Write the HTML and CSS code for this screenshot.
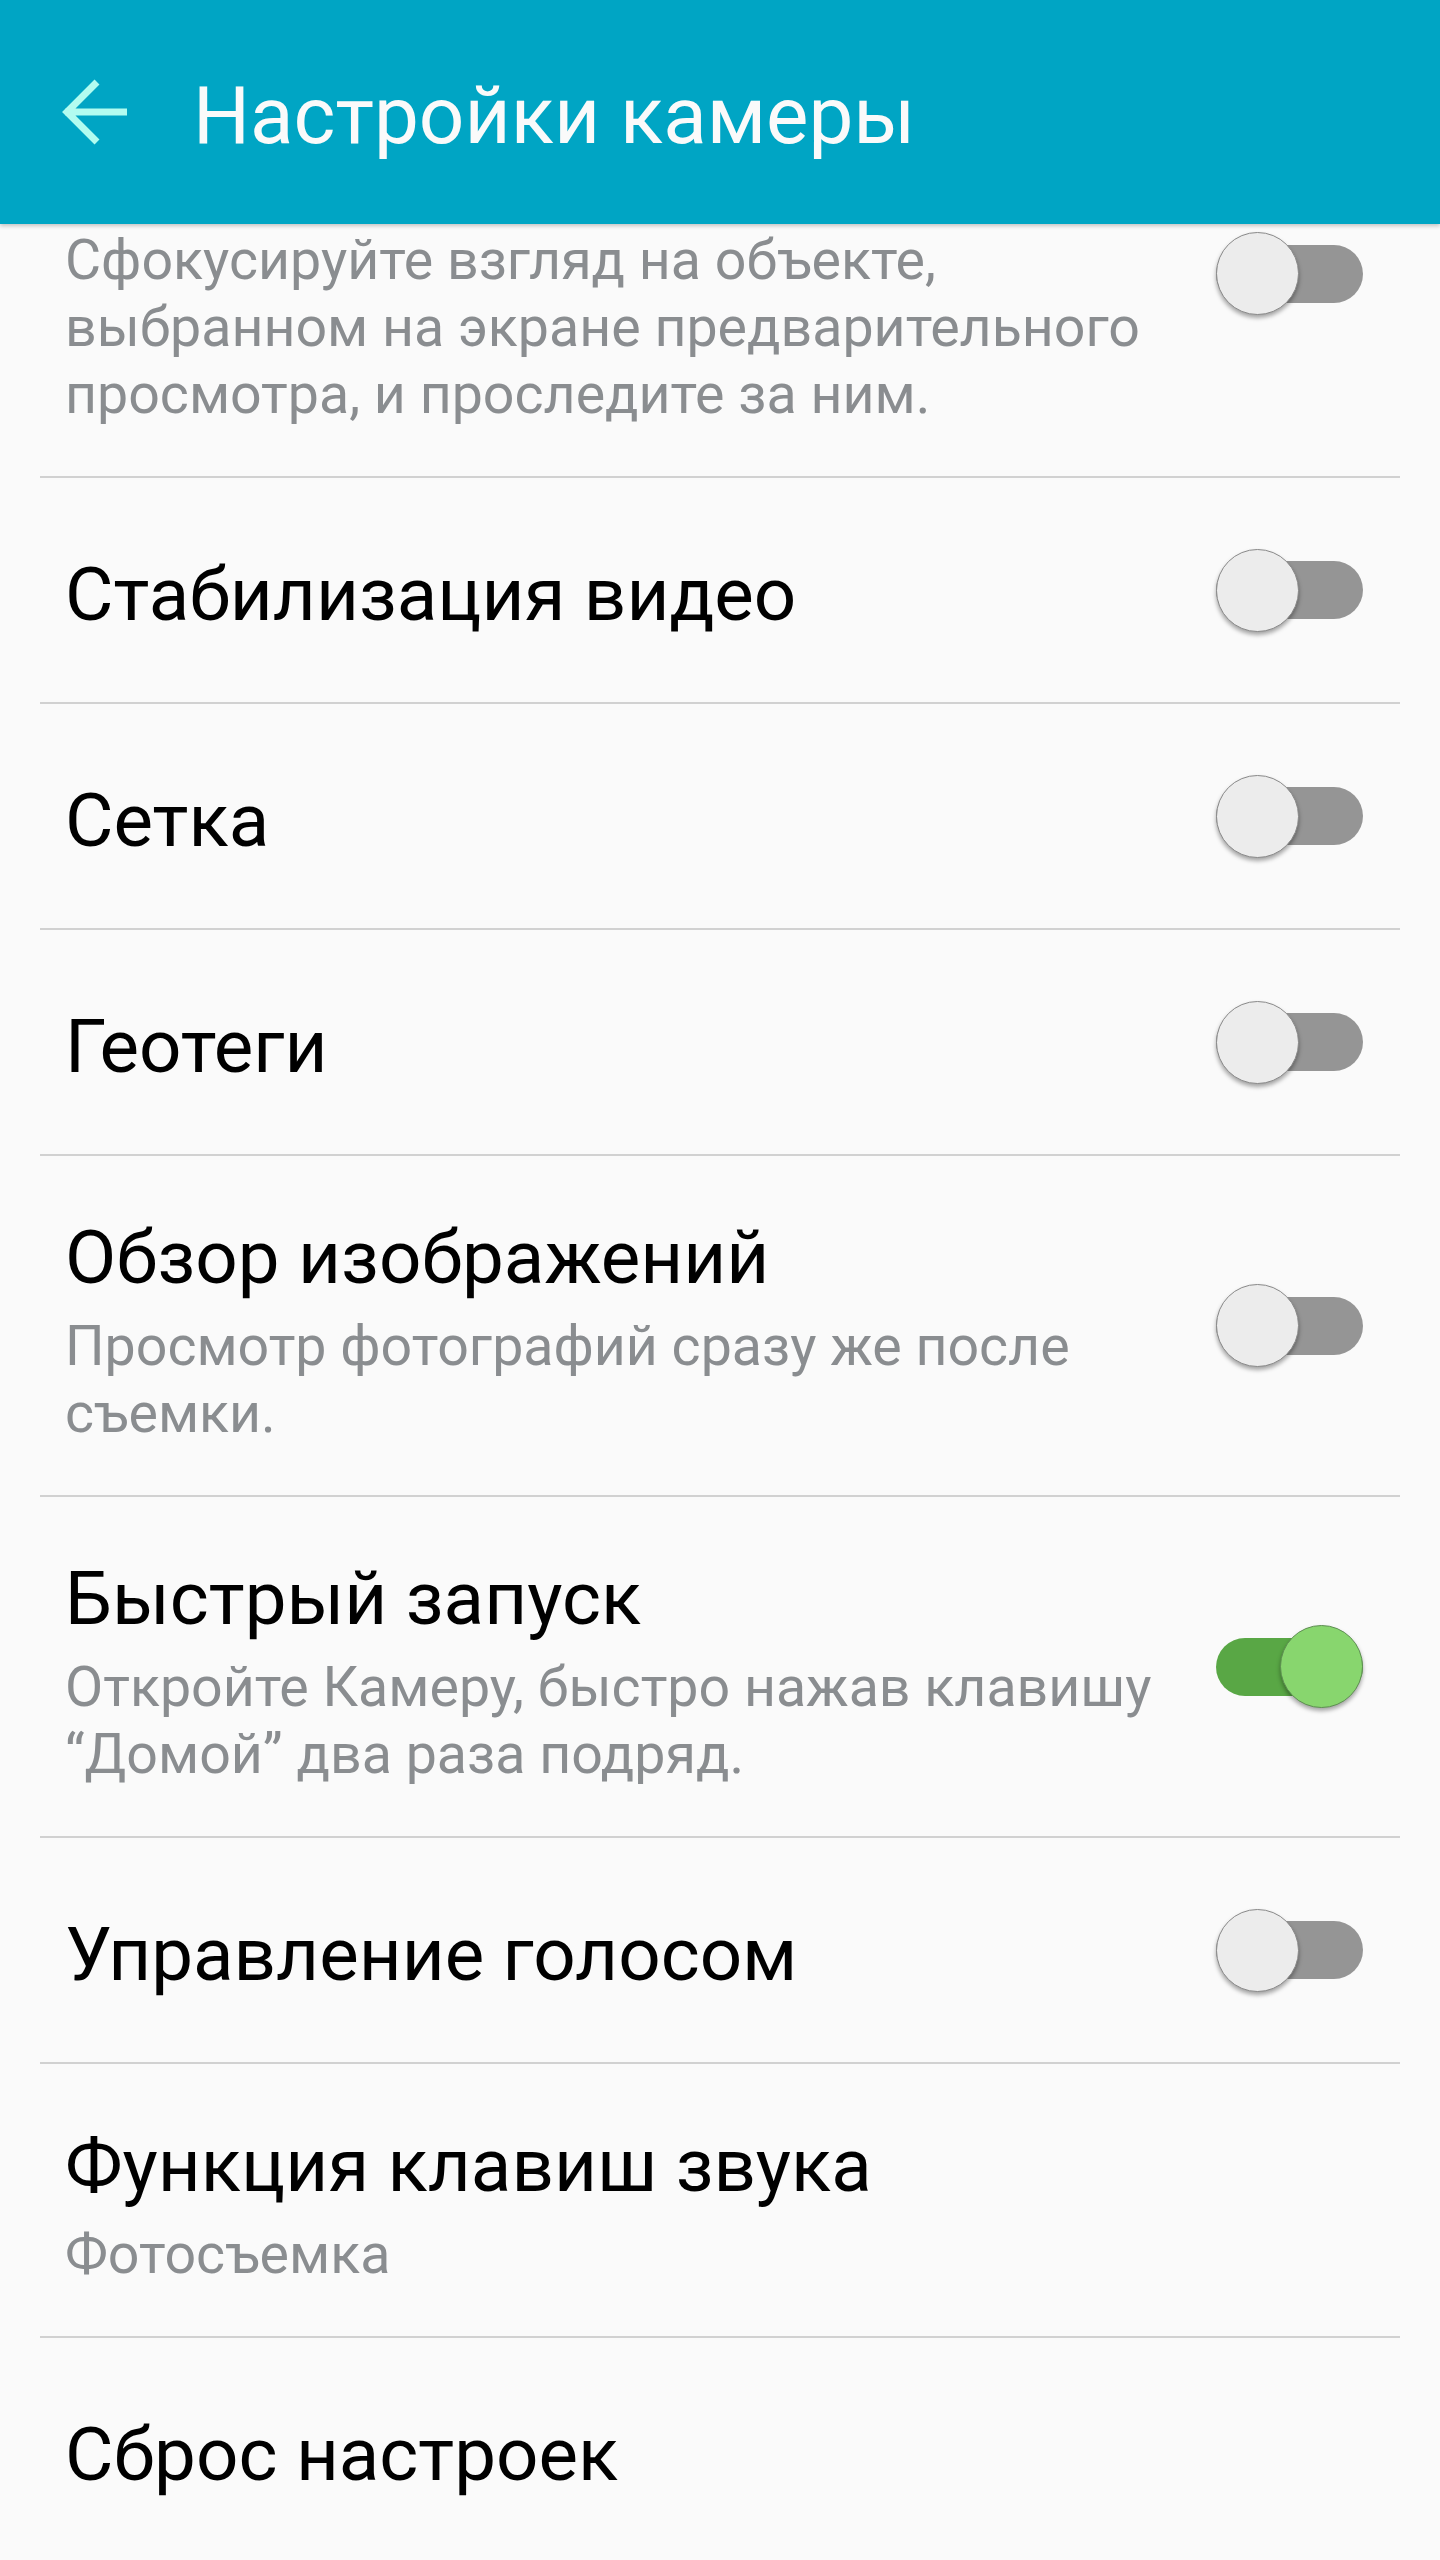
FILE: index.html
```html
<!DOCTYPE html>
<html lang="ru">
<head>
<meta charset="utf-8">
<title>Настройки камеры</title>
<link rel="stylesheet" href="styles.css">
</head>
<body>
<header class="appbar">
  <svg class="back" width="70" height="70" viewBox="0 0 70 70" aria-hidden="true">
    <path d="M4 35 H66 M36 5 L6 35 L36 65" fill="none" stroke="#b2fcf0" stroke-width="7"/>
  </svg>
  <h1 class="appbar-title">Настройки камеры</h1>
</header>
<main class="list">
  <div class="row partial">
    <div class="text">
      <div class="sub">Сфокусируйте взгляд на объекте, выбранном на экране предварительного просмотра, и проследите за ним.</div>
    </div>
    <div class="switch"><span class="track"></span><span class="thumb"></span></div>
  </div>
  <div class="row">
    <div class="text"><div class="title">Стабилизация видео</div></div>
    <div class="switch"><span class="track"></span><span class="thumb"></span></div>
  </div>
  <div class="row">
    <div class="text"><div class="title">Сетка</div></div>
    <div class="switch"><span class="track"></span><span class="thumb"></span></div>
  </div>
  <div class="row">
    <div class="text"><div class="title">Геотеги</div></div>
    <div class="switch"><span class="track"></span><span class="thumb"></span></div>
  </div>
  <div class="row">
    <div class="text">
      <div class="title">Обзор изображений</div>
      <div class="sub">Просмотр фотографий сразу же после съемки.</div>
    </div>
    <div class="switch"><span class="track"></span><span class="thumb"></span></div>
  </div>
  <div class="row">
    <div class="text">
      <div class="title">Быстрый запуск</div>
      <div class="sub">Откройте Камеру, быстро нажав клавишу “Домой” два раза подряд.</div>
    </div>
    <div class="switch on"><span class="track"></span><span class="thumb"></span></div>
  </div>
  <div class="row">
    <div class="text"><div class="title">Управление голосом</div></div>
    <div class="switch"><span class="track"></span><span class="thumb"></span></div>
  </div>
  <div class="row">
    <div class="text">
      <div class="title">Функция клавиш звука</div>
      <div class="sub">Фотосъемка</div>
    </div>
  </div>
  <div class="row last">
    <div class="text"><div class="title">Сброс настроек</div></div>
  </div>
</main>
</body>
</html>
```
FILE: styles.css
```css
* { box-sizing: content-box; }
html, body {
  margin: 0;
  padding: 0;
  background: #fafafa;
  font-family: Roboto, "Noto Sans", "DejaVu Sans", sans-serif;
  overflow: hidden;
}
.appbar {
  position: relative;
  z-index: 1;
  height: 224px;
  background: #00a5c4;
  display: flex;
  align-items: center;
  padding-left: 61px;
  box-shadow: 0 2px 4px rgba(0, 0, 0, 0.22);
}
.back {
  display: block;
  flex: none;
}
.appbar-title {
  margin: 0 0 0 62px;
  padding-top: 8px;
  font-size: 80px;
  line-height: 80px;
  font-weight: 400;
  color: #fafafa;
}
.list {
  margin: 0 40px;
}
.row {
  display: flex;
  align-items: center;
  min-height: 128px;
  padding: 48px 37px 48px 25px;
  border-bottom: 2px solid #d1d1d1;
}
.row.last { border-bottom: none; }
.row.partial {
  align-items: flex-start;
  min-height: 0;
  padding-top: 0;
}
.text {
  flex: 1;
  padding-top: 10px;
  padding-right: 26px;
}
.partial .text { padding-top: 3px; }
.title {
  font-size: 74.5px;
  line-height: 88px;
  color: #000;
}
.sub {
  font-size: 55.5px;
  line-height: 67px;
  color: #8a8d90;
}
.title + .sub { margin-top: 11px; }
.switch {
  flex: none;
  width: 147px;
  height: 83px;
  display: grid;
}
.partial .switch { margin-top: 8px; }
.track, .thumb { grid-area: 1 / 1; }
.track {
  align-self: center;
  height: 58px;
  border-radius: 29px;
  background: #959595;
}
.thumb {
  justify-self: start;
  width: 81px;
  height: 81px;
  border-radius: 50%;
  background: #ececec;
  border: 1px solid #8a8a8a;
  box-shadow: 0 3px 4px rgba(0, 0, 0, 0.35);
}
.switch.on .track { background: #59a745; }
.switch.on .thumb {
  justify-self: end;
  background: #88d66e;
  border-color: #5e8f52;
}
```
